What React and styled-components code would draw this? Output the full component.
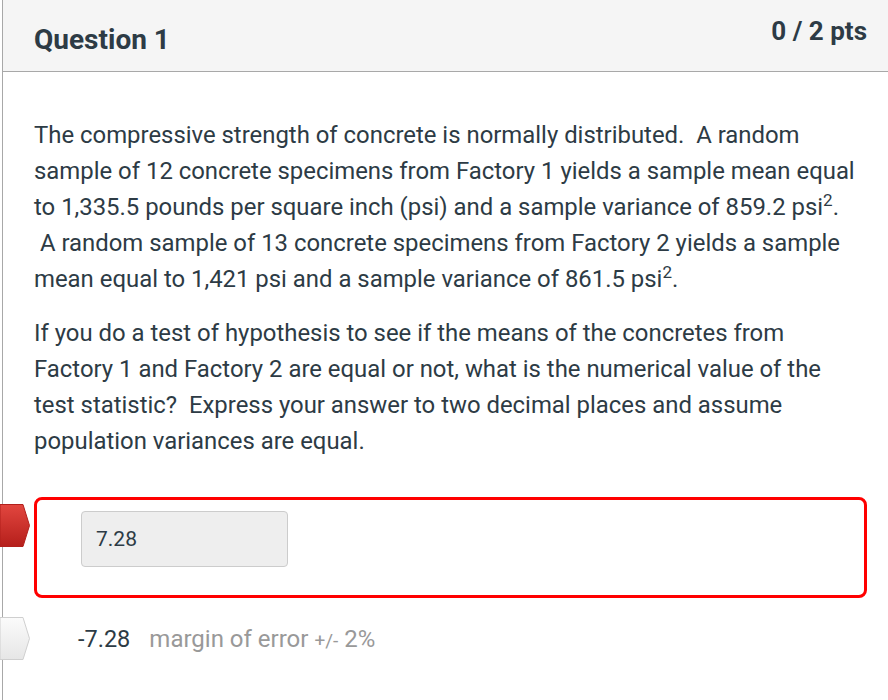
import React from "react";
import styled, { createGlobalStyle } from "styled-components";

const GlobalStyle = createGlobalStyle`
  html, body {
    margin: 0;
    padding: 0;
    background: #fff;
  }
  body {
    font-family: Roboto, "Liberation Sans", sans-serif;
    color: #2d3b45;
    overflow: hidden;
  }
`;

// Question card
const Card = styled.div`
  margin-left: 2px;
  min-height: 700px;
  border-left: 1px solid #a8a8a8;
`;

const Header = styled.div`
  display: flex;
  justify-content: space-between;
  align-items: flex-start;
  height: 72px;
  box-sizing: border-box;
  padding: 0 21px 0 31px;
  background: #f5f5f5;
  border-bottom: 1px solid #a8a8a8;
`;

const Title = styled.h2`
  margin: 23px 0 0;
  font-size: 28px;
  line-height: 34px;
  font-weight: 700;
  color: #2d3b45;
`;

const Points = styled.div`
  margin-top: 16px;
  font-size: 26px;
  line-height: 30px;
  font-weight: 700;
  color: #2d3b45;
`;

const Body = styled.div`
  padding: 45px 21px 0 31px;
`;

const Text = styled.p`
  margin: 0 0 18px;
  font-size: 23.9px;
  line-height: 36px;
  color: #2d3b45;
  white-space: nowrap;
`;

const Sup = styled.sup`
  font-size: 17px;
  line-height: 0;
  vertical-align: 9px;
`;

const Answers = styled.div`
  margin-top: 38px;
`;

const AnswerRow = styled.div`
  position: relative;
  margin-top: ${({ $gap }) => $gap || 0}px;
`;

const WrongBox = styled.div`
  height: 101px;
  box-sizing: border-box;
  padding: 11px 44px;
  border: 3px solid #ff0000;
  border-radius: 8px;
`;

const AnswerInput = styled.div`
  width: 207px;
  height: 56px;
  box-sizing: border-box;
  display: flex;
  align-items: center;
  padding-left: 14px;
  background: #eeeeee;
  border: 1px solid #cccccc;
  border-radius: 4px;
  font-size: 21px;
  color: #2d3b45;
`;

const CorrectLine = styled.div`
  display: flex;
  align-items: center;
  height: 44px;
  padding-left: 44px;
  font-size: 23.5px;
`;

const Value = styled.span`
  color: #2d3b45;
  margin-right: 19px;
`;

const Tolerance = styled.span`
  color: #999999;
  font-size: 24px;
`;

const Small = styled.span`
  font-size: 19px;
`;

const MarkerSvg = styled.svg`
  position: absolute;
  left: -34px;
  top: ${({ $top }) => $top}px;
`;

const Marker = ({ kind, top }) => {
  const red = kind === "wrong";
  const id = red ? "gWrong" : "gRight";
  return (
    <MarkerSvg $top={top} width="31" height="43" viewBox="0 0 31 43">
      <defs>
        <linearGradient id={id} x1="0" y1="0" x2="0" y2="1">
          <stop offset="0" stopColor={red ? "#e2463f" : "#fbfbfb"} />
          <stop offset="1" stopColor={red ? "#b51f1b" : "#e6e6e6"} />
        </linearGradient>
      </defs>
      <path
        d="M0 0.5 H23 L29.5 21.5 L23 42.5 H0 Z"
        fill={`url(#${id})`}
        stroke={red ? "#b2201c" : "#cfcfcf"}
        strokeWidth="1"
        strokeLinejoin="round"
      />
    </MarkerSvg>
  );
};

export default function App() {
  return (
    <>
      <GlobalStyle />
      <Card>
        <Header>
          <Title>Question 1</Title>
          <Points>0 / 2 pts</Points>
        </Header>
        <Body>
          <Text>
            The compressive strength of concrete is normally distributed.&nbsp; A random
            <br />
            sample of 12 concrete specimens from Factory 1 yields a sample mean equal
            <br />
            to 1,335.5 pounds per square inch (psi) and a sample variance of 859.2 psi<Sup>2</Sup>.
            <br />
            &nbsp;A random sample of 13 concrete specimens from Factory 2 yields a sample
            <br />
            mean equal to 1,421 psi and a sample variance of 861.5 psi<Sup>2</Sup>.
          </Text>
          <Text>
            If you do a test of hypothesis to see if the means of the concretes from
            <br />
            Factory 1 and Factory 2 are equal or not, what is the numerical value of the
            <br />
            test statistic?&nbsp; Express your answer to two decimal places and assume
            <br />
            population variances are equal.
          </Text>
          <Answers>
            <AnswerRow>
              <Marker kind="wrong" top={7} />
              <WrongBox>
                <AnswerInput>7.28</AnswerInput>
              </WrongBox>
            </AnswerRow>
            <AnswerRow $gap={19}>
              <Marker kind="right" top={0} />
              <CorrectLine>
                <Value>-7.28</Value>
                <Tolerance>
                  margin of error <Small>+/-</Small> 2%
                </Tolerance>
              </CorrectLine>
            </AnswerRow>
          </Answers>
        </Body>
      </Card>
    </>
  );
}
